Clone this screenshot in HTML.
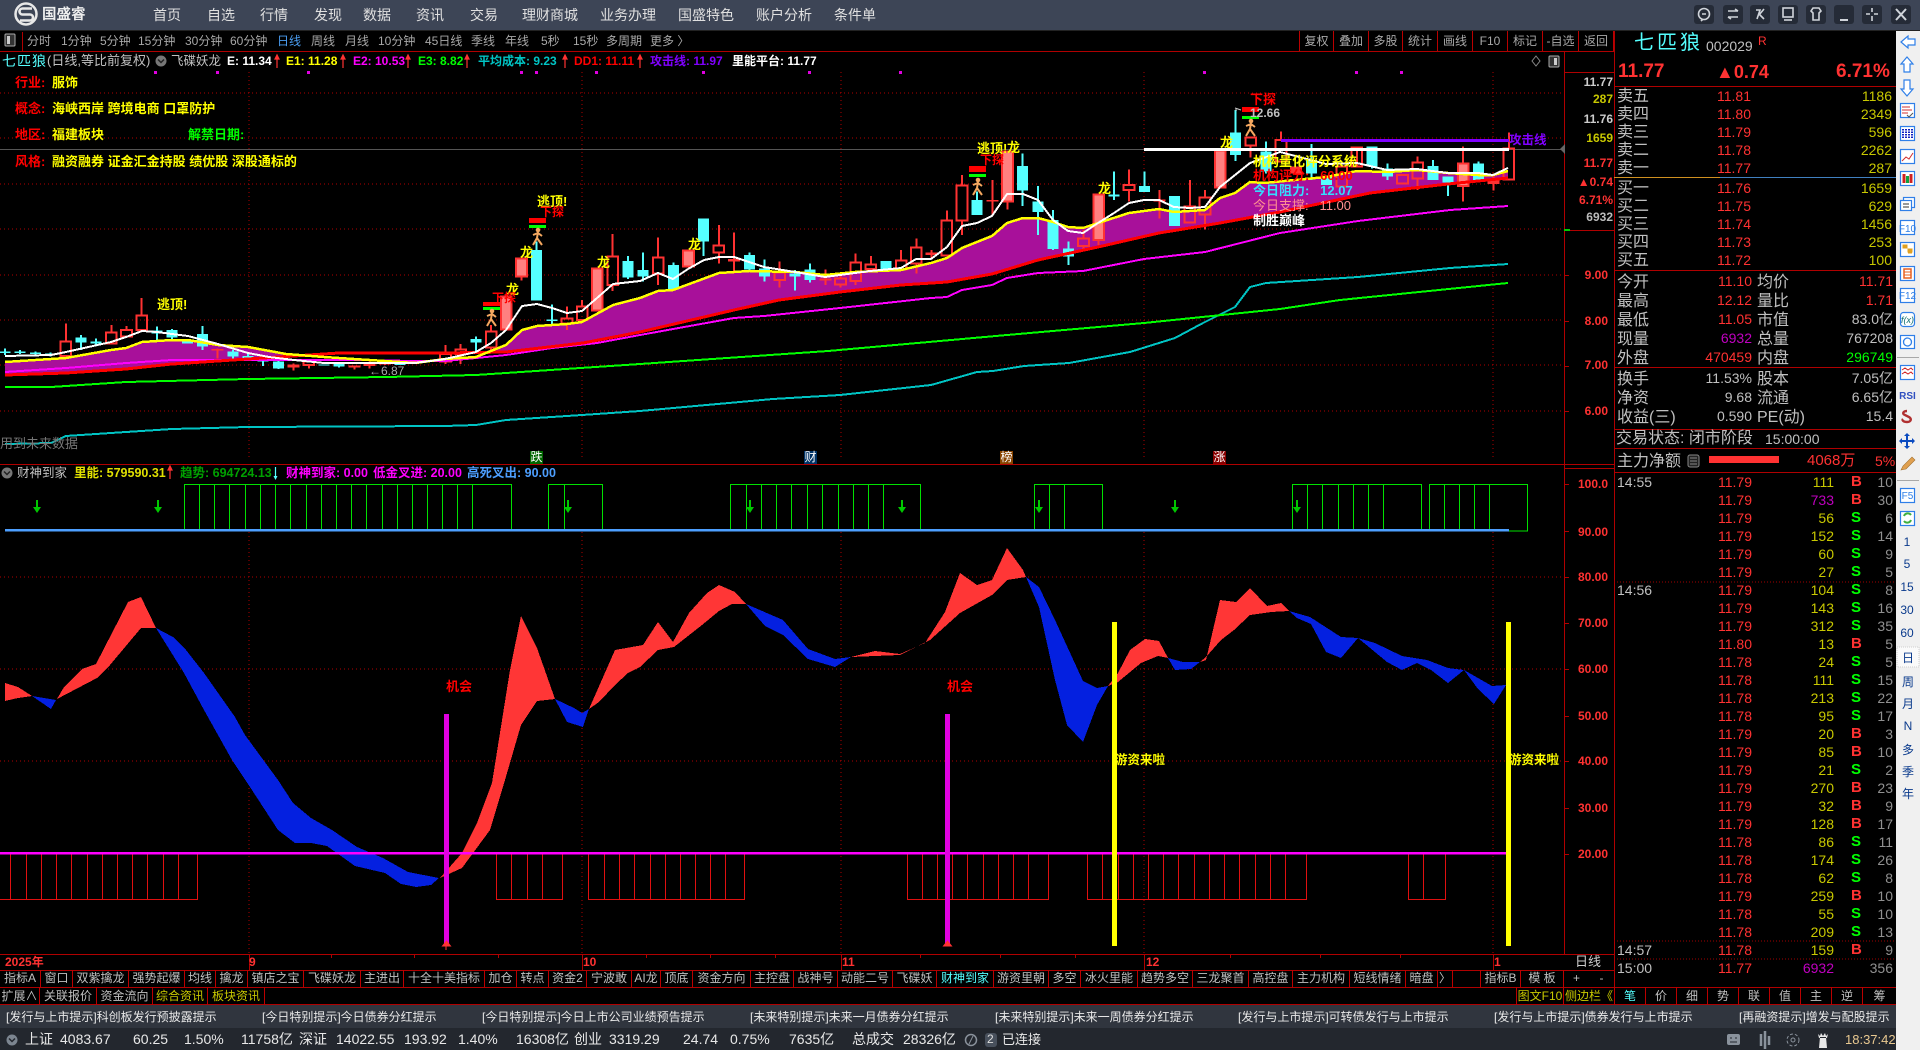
<!DOCTYPE html>
<html lang="zh">
<head>
<meta charset="utf-8">
<title>国盛睿</title>
<style>
html,body{margin:0;padding:0;background:#000}
body{position:relative;width:1920px;height:1050px;overflow:hidden;font-family:"Liberation Sans","WenQuanYi Zen Hei","Noto Sans CJK SC",sans-serif;font-size:12px;color:#c0c0c0}
.t{position:absolute;white-space:nowrap;line-height:20px;height:20px}
.bd{font-weight:bold}
svg{position:absolute;left:0;top:0}
.c path{vector-effect:non-scaling-stroke;fill:none}
.k{position:absolute;top:970px;height:17px;line-height:17px;text-align:center;border-right:1px solid #b00;box-sizing:border-box;color:#c0c0c0;white-space:nowrap;overflow:hidden}
.m{top:987px;height:18px;line-height:18px}
.top{position:absolute;top:0;height:30px;line-height:30px;font-size:14px;color:#e0e0e0;white-space:nowrap}
.tb{position:absolute;top:31px;height:20px;line-height:20px;color:#a8a8a8;white-space:nowrap}
.tr{position:absolute;top:31px;height:20px;line-height:20px;text-align:center;border-left:1px solid #b00;box-sizing:border-box;color:#a8a8a8}
.p{position:absolute;left:1614px;width:282px}
.r{position:relative;height:18px;line-height:18px}
.r19{height:19px;line-height:19px}
.r span{position:absolute;white-space:nowrap}
.l{left:3px;top:1px;font-size:16px;color:#c0c0c0}
.pr{right:145px;font-size:14px;color:#ff3232}
.v{right:4px;font-size:14px;color:#c8c800}
.sv{right:144px;font-size:14px;color:#c0c0c0}
.l2{left:143px;top:1px;font-size:16px;color:#c0c0c0}
.sw{right:3px;font-size:14px;color:#c0c0c0}
.a{left:3px;font-size:14px;color:#c0c0c0}
.b{right:144px;font-size:14px;color:#ff3232}
.n{right:62px;font-size:14px;color:#c8c800}
.d{left:237px;font-size:15px;font-weight:bold;color:#0f0}
.d.x{color:#ff3232}
.e{right:3px;font-size:14px;color:#909090}
.red{color:#ff3232}
.pu{color:#c000c0}
.y{color:#ff0}
.tag{position:absolute;top:451px;width:13px;height:13px;line-height:13px;color:#fff;text-align:center;font-size:12px}
.tk{position:absolute;top:1006px;height:22px;line-height:22px;color:#e8e8e8;white-space:nowrap}
.st{position:absolute;top:1029px;height:21px;line-height:21px;font-size:14px;white-space:nowrap;color:#e8e8e8}
</style>
</head>
<body>

<svg width="1920" height="1050" viewBox="0 0 1920 1050">
<!-- Bars -->
<rect x="0" y="0" width="1920" height="30" fill="#3d4556"/>
<rect x="0" y="30" width="1920" height="1" fill="#222"/>
<rect x="0" y="1005" width="1896" height="23" fill="#30353e"/>
<rect x="0" y="1028" width="1896" height="22" fill="#23272e"/>
<rect x="1896" y="31" width="24" height="1019" fill="#f0f0f0"/>

<!-- logo -->
<circle cx="26" cy="14" r="10.5" fill="none" stroke="#e8e8e8" stroke-width="2.5"/>
<path d="M32 8.5H22.5a3 3 0 0 0 0 6H30a3 3 0 0 1 0 6H20" fill="none" stroke="#e8e8e8" stroke-width="2.6"/>

<!-- win buttons -->
<g fill="#252b37">
<rect x="1694" y="5" width="20" height="19" rx="3"/><rect x="1723" y="5" width="20" height="19" rx="3"/>
<rect x="1750" y="5" width="20" height="19" rx="3"/><rect x="1778" y="5" width="20" height="19" rx="3"/>
<rect x="1806" y="5" width="20" height="19" rx="3"/><rect x="1834" y="5" width="20" height="19" rx="3"/>
<rect x="1862" y="5" width="20" height="19" rx="3"/><rect x="1891" y="5" width="20" height="19" rx="3"/>
</g>
<g fill="none" stroke="#d0d4da" stroke-width="1.6">
<circle cx="1704" cy="14" r="5.5"/><path d="M1702 14h4M1703 19l-2 2"/>
<path d="M1728 11h10M1735 9l3 2M1728 17h10M1731 19l-3-2"/>
<path d="M1756 10h4l-3 9M1759 14l5 5M1764 9l-5 6"/>
<rect x="1783" y="8" width="10" height="9"/><path d="M1784 20h8"/>
<path d="M1813 8h6l2 3-2 2v7h-6v-7l-2-2z"/>
<path d="M1840 20h8" stroke-width="2"/>
<path d="M1872 8v4M1872 16v5M1866 14h4M1874 14h4"/>
<path d="M1896 9l10 11M1906 9l-10 11" stroke-width="2"/>
</g>

<!-- Grid -->
<g stroke="#b00000" stroke-width="1" stroke-dasharray="1 3" fill="none">
<path d="M0 93H1564M0 138H1564M0 184H1564M0 229H1564M0 275H1564M0 320H1564M0 365H1564M0 411H1564"/>
<path d="M0 577H1564M0 669H1564M0 761H1564"/>
<path d="M249 72V460M582 72V460M841 72V460M1144 72V460M1493 72V460M249 532V954M582 532V954M841 532V954M1144 532V954M1493 532V954"/>
</g>
<path d="M0 149.5H1144M1509 149.5H1564" stroke="#555" stroke-width="1"/>

<!-- separators -->
<g stroke="#b00000" stroke-width="1" fill="none" shape-rendering="crispEdges">
<path d="M0 51.5H1614M0 464.5H1564M0 954.5H1614M0 970.5H1614M0 987.5H1896M0 1004.5H1896"/>
<path d="M1564.5 52V954M1614.5 31V1005M22.5 32V51"/>
<path d="M1564 72.5H1614M1564 230.5H1614M1564 464.5H1614M1564 468.5H1614"/>
<path d="M1614 86.5H1896M1614 270.5H1896M1614 367.5H1896M1614 429.5H1896M1614 448.5H1896M1614 472.5H1896"/>
<path d="M1564 275.5h5M1564 321.5h5M1564 366.5h5M1564 411.5h5M1564 484.5h5M1564 531.5h5M1564 577.5h5M1564 623.5h5M1564 669.5h5M1564 716.5h5M1564 761.5h5M1564 808.5h5M1564 854.5h5"/>
<path d="M331.5 954v4M414.5 954v4M498.5 954v4M646.5 954v4M710.5 954v4M775.5 954v4M249.5 954v16M582.5 954v16M841.5 954v16M1144.5 954v16M1493.5 954v16M920.5 954v4M1000.5 954v4M1075.5 954v4M1230.5 954v4M1320.5 954v4M1400.5 954v4"/>
</g>
<path d="M1614 177.5H1720" stroke="#d09020"/><path d="M1720 177.5H1896" stroke="#4080c0"/>
<path d="M1614 582H1896M1614 941H1896M1614 959H1896" stroke="#a00000" stroke-dasharray="1 2"/>
<path d="M1560 149l5-5v10z" fill="#666"/>
<path d="M1564 230h6" stroke="#0c0" stroke-width="2"/>

<!-- top magenta dots -->
<g fill="#e000e0"><rect x="154" y="71" width="3" height="3"/><rect x="216" y="71" width="3" height="3"/><rect x="307" y="71" width="3" height="3"/><rect x="520" y="71" width="3" height="3"/><rect x="535" y="71" width="3" height="3"/><rect x="595" y="71" width="3" height="3"/><rect x="702" y="71" width="3" height="3"/><rect x="808" y="71" width="3" height="3"/><rect x="899" y="71" width="3" height="3"/><rect x="1203" y="71" width="3" height="3"/><rect x="1355" y="71" width="3" height="3"/><rect x="1400" y="71" width="3" height="3"/></g>

<!-- Purple fill -->
<g fill="#a8109a" shape-rendering="crispEdges">
<polygon points="5,362 51,359 66,358 111,350 126,348 142,342 172,340 188,340 218,345 248,347 286,354 294,356 263,358 218,361 172,364 126,369 66,373 5,375"/>
<polygon points="480,353 506,345 522,330 537,326 567,324 582,322 613,305 640,298 658,291 673,290 719,273 749,271 795,272 825,275 855,272 901,270 931,263 947,258 962,248 992,236 1007,223 1023,218 1038,218 1053,222 1068,227 1083,228 1098,223 1129,213 1159,209 1174,212 1205,210 1220,198 1235,193 1250,182 1264,183 1326,177 1357,171 1387,172 1417,170 1448,173 1478,175 1493,175 1508,171 1508,178 1448,184 1370,193 1280,212 1220,223 1159,233 1098,247 1038,260 992,274 947,282 901,285 840,292 779,300 734,310 640,332 583,343 506,352"/>
</g>

<!-- Candles zoom-space groups -->
<g class="c" shape-rendering="crispEdges">
<g transform="translate(5,180) scale(15.19,.33333)">
<path stroke="#ff3232" stroke-width="2" d="M4 430V485M4 528V530M7 435V458M8 438V450M9 354V406M14 505V535M19 550V572M20 540V545M20 555V566M23 556V568M24 545V565M25 545V555M29 495V522M29 545V552M30 492V508M30 522V552M32 435V455M32 502V515M33 340V350M34 290V302M37 380V415M37 430V450M38 360V380M40 162V230M40 315V333"/>
<path stroke="#ff3232" stroke-width="12" d="M14 507V512M19 553V562M23 556V562M24 548V558M25 548V553"/>
<path stroke="#ff3232" stroke-width="2" d="M3.65 485h.7v43h-.7zM6.65 458h.7v32h-.7zM7.65 450h.7v20h-.7zM8.65 406h.7v44h-.7zM19.65 545h.7v10h-.7zM28.65 522h.7v23h-.7zM29.65 508h.7v14h-.7zM31.65 455h.7v47h-.7zM36.65 415h.7v15h-.7zM37.65 380h.7v40h-.7zM39.65 230h.7v85h-.7z"/>
<path stroke="#ff3232" stroke-width="2" style="fill:#ff8080" d="M32.65 350h.7v98h-.7zM33.65 235h.7v55h-.7zM38.65 265h.7v127h-.7z"/>
<path stroke="#55ffff" stroke-width="2" d="M0 505V525M1 510V522M2 515V525M3 518V530M5 465V510M6 475V495M10 440V485M11 447V478M13 438V510M15 510V535M16 518V540M17 538V558M18 543V567M22 548V562M31 470V515M36 373V435M35 185V210M41 228V297"/>
<path stroke="#55ffff" stroke-width="11" d="M0 515V519M1 515V519M2 518V522M3 520V524M5 473V487M6 484V490M10 452V460M11 450V473M12 480V490M13 462V500M15 515V530M16 528V534M17 540V545M18 545V565M21 553V557M22 552V560M26 548V555M31 477V487M35 210V362M36 418V423M41 243V292"/>
</g>
<g transform="translate(5,100) scale(15.19,.33333)">
<path stroke="#ff3232" stroke-width="2" d="M43 412V473M43 520V555M47 375V437M47 458V490M48 397V520M51 485V518M51 540V562M54 508V555M55 525V535M55 553V562M56 460V488M56 543V555M57 468V493M57 507V515M59 450V482M59 508V512M60 415V443M60 490V520M61 450V478M62 332V362M63 225V257M63 362V405M65 240V345M66 305V328M71 390V415M71 438V447M72 420V435M74 208V255M74 270V305M76 270V355M78 240V320M79 270V292M79 343V388M82 137V172"/>
<path stroke="#ff3232" stroke-width="12" d="M48 477V485M54 535V542M61 458V465M65 300V304M76 298V305"/>
<path stroke="#ff3232" stroke-width="2" d="M42.65 473h.7v47h-.7zM46.65 437h.7v21h-.7zM50.65 518h.7v22h-.7zM54.65 535h.7v18h-.7zM55.65 488h.7v55h-.7zM56.65 493h.7v14h-.7zM58.65 482h.7v26h-.7zM59.65 443h.7v47h-.7zM61.65 362h.7v105h-.7zM62.65 257h.7v105h-.7zM70.65 415h.7v23h-.7zM73.65 255h.7v15h-.7zM77.65 320h.7v48h-.7zM78.65 292h.7v51h-.7zM81.65 112h.7v25h-.7z"/>
<path stroke="#ff3232" stroke-width="2" style="fill:#ff8080" d="M44.65 452h.7v48h-.7zM65.65 155h.7v150h-.7zM71.65 283h.7v137h-.7zM79.65 152h.7v110h-.7z"/>
<path stroke="#55ffff" stroke-width="2" d="M42 457V545M44 487V570M46 425V468M49 457V510M50 478V545M52 510V572M53 490V548M64 275V300M67 160V318M68 258V405M69 330V450M70 425V495M73 215V300M75 215V276M81 30V183"/>
<path stroke="#55ffff" stroke-width="11" d="M42 510V530M44 495V568M46 355V425M49 465V508M50 505V530M52 520V530M53 508V540M58 483V510M64 300V345M67 198V272M68 305V336M69 360V447M70 445V470M73 283V289M75 258V276M77 288V378M81 98V165"/>
</g>
<g transform="translate(5,0) scale(15.19,.33333)">
<path stroke="#ff3232" stroke-width="2" d="M84 395V420M93 470V488M93 535V570M96 440V490M96 558V605M98 520V572M99 398V445M89 442V500"/>
<path stroke="#ff3232" stroke-width="12" d="M85 500V520M98 540V552"/>
<path stroke="#ff3232" stroke-width="2" d="M83.65 420h.7v65h-.7zM87.65 500h.7v60h-.7zM88.65 442h.7v58h-.7zM91.65 525h.7v25h-.7zM92.65 488h.7v47h-.7zM98.65 445h.7v93h-.7z"/>
<path stroke="#ff3232" stroke-width="2" style="fill:#ff8080" d="M95.65 490h.7v68h-.7z"/>
<path stroke="#55ffff" stroke-width="2" d="M83 425V520M86 432V540M91 490V540M94 480V540M95 530V588M97 485V545M90 440V505"/>
<path stroke="#55ffff" stroke-width="11" d="M83 455V515M86 480V520M87 530V555M90 440V500M91 505V530M94 498V540M95 530V548M97 490V540"/>
</g>
</g>

<!-- MA lines -->
<g fill="none" shape-rendering="crispEdges">
<polyline stroke="#00c4c4" stroke-width="2" points="5,444 51,443 66,436 126,432 172,429 248,427 445,426 476,425 506,420 582,415 640,411 773,399 840,395 931,385 977,372 993,371 1024,366 1069,363 1130,352 1175,338 1203,323 1235,307 1250,287 1266,283 1358,277 1450,268 1508,264"/>
<polyline stroke="#00ff00" stroke-width="2" points="5,387 51,387 126,382 248,379 386,377 476,375 640,364 828,351 1007,335 1144,323 1280,309 1340,300 1508,283"/>
<polyline stroke="#ff00ff" stroke-width="2" points="5,372 66,368 126,363 172,360 218,360 354,360 415,361 445,361 476,358 506,355 552,348 597,343 640,335 734,318 764,316 840,308 931,298 947,297 962,290 992,285 1007,278 1038,273 1083,271 1144,259 1205,252 1280,233 1358,221 1450,210 1508,206"/>
<polyline stroke="#ff0000" stroke-width="3" points="5,375 66,373 126,369 172,364 218,361 263,358 294,356 339,353 415,353 445,353 506,352 583,343 640,332 734,310 779,300 840,292 901,285 947,282 992,274 1038,260 1098,247 1159,233 1220,223 1280,212 1370,193 1448,184 1508,178"/>
<polyline stroke="#ffff00" stroke-width="2.5" points="5,362 51,359 66,358 111,350 126,348 142,342 172,340 188,340 218,345 248,347 286,354 324,357 354,359 415,363 445,359 476,357 506,345 522,330 537,326 567,324 582,322 613,305 640,298 658,291 673,290 719,273 749,271 795,272 825,275 855,272 901,270 931,263 947,258 962,248 992,236 1007,223 1023,218 1038,218 1053,222 1068,227 1083,228 1098,223 1129,213 1159,209 1174,212 1205,210 1220,198 1235,193 1250,182 1264,183 1326,177 1357,171 1387,172 1417,170 1448,173 1478,175 1493,175 1508,171"/>
<polyline stroke="#ffffff" stroke-width="2" points="5,356 51,355 66,352 111,342 126,337 142,331 157,332 172,334 188,336 218,344 248,353 269,357 294,360 324,363 354,363 415,363 445,359 476,352 491,343 506,330 522,306 537,304 552,308 567,313 582,311 597,298 613,284 640,281 658,273 673,279 688,269 704,260 719,257 734,257 749,262 764,267 795,272 825,277 840,275 870,271 901,268 916,259 931,259 947,247 962,226 977,223 992,216 1007,194 1023,194 1038,200 1053,220 1068,231 1083,233 1098,223 1114,213 1129,203 1144,200 1159,200 1174,207 1190,208 1205,207 1220,187 1235,175 1250,163 1280,152 1326,164 1357,163 1387,170 1417,169 1448,173 1478,173 1493,175 1508,168"/>
</g>
<rect x="1144" y="148" width="365" height="3" fill="#fff"/>
<rect x="1281" y="139" width="228" height="3" fill="#8000ff"/>

<!-- Signal bars & runners -->
<defs>
<g id="run" fill="none" stroke="#f5a860" stroke-width="2"><circle cx="0" cy="-8" r="1.3" fill="#f5a860"/><path d="M0-6L-1 0L-5 7M-1 0L4 7M-5-3L0-5L4-2"/></g>
</defs>
<g>
<rect x="529" y="218" width="17" height="5" fill="#f00"/><rect x="529" y="225" width="17" height="3" fill="#0f0"/><use href="#run" x="538" y="238"/>
<rect x="483" y="302" width="17" height="4" fill="#f00"/><rect x="483" y="307" width="17" height="3" fill="#0f0"/><use href="#run" x="492" y="319"/>
<rect x="969" y="166" width="17" height="6" fill="#f00"/><rect x="969" y="174" width="17" height="3" fill="#0f0"/><use href="#run" x="978" y="188"/>
<rect x="1242" y="107" width="17" height="5" fill="#f00"/><rect x="1242" y="116" width="17" height="3" fill="#0f0"/><use href="#run" x="1251" y="129"/>
</g>
<path d="M1235 108l6 2M1237 110h-2" stroke="#ccc" fill="none"/>

<!-- Sub chart: green boxes -->
<g fill="none" stroke="#00e000" stroke-width="1" shape-rendering="crispEdges">
<path d="M184.5 530V484.5H511.5V530M548.5 530V484.5H602.5V530M730.5 530V484.5H920.5V530M1034.5 530V484.5H1102.5V530M1292.5 530V484.5H1421.5V530M1429.5 530V484.5H1527.5V531H1509"/>
<path d="M199.5 485V530M214.5 485V530M229.5 485V530M245.5 485V530M260.5 485V530M275.5 485V530M290.5 485V530M306.5 485V530M321.5 485V530M336.5 485V530M351.5 485V530M366.5 485V530M382.5 485V530M397.5 485V530M412.5 485V530M427.5 485V530M442.5 485V530M457.5 485V530M472.5 485V530M564.5 485V530M746.5 485V530M761.5 485V530M776.5 485V530M791.5 485V530M807.5 485V530M822.5 485V530M838.5 485V530M853.5 485V530M868.5 485V530M883.5 485V530M1049.5 485V530M1064.5 485V530M1307.5 485V530M1322.5 485V530M1338.5 485V530M1353.5 485V530M1368.5 485V530M1383.5 485V530M1444.5 485V530M1459.5 485V530M1474.5 485V530M1489.5 485V530"/>
</g>
<rect x="5" y="529" width="1504" height="2.5" fill="#4d9fff"/>
<g fill="#00c800">
<path d="M36 500h2v7h3l-4 6-4-6h3zM157 500h2v7h3l-4 6-4-6h3zM567 500h2v7h3l-4 6-4-6h3zM749 500h2v7h3l-4 6-4-6h3zM901 500h2v7h3l-4 6-4-6h3zM1038 500h2v7h3l-4 6-4-6h3zM1174 500h2v7h3l-4 6-4-6h3zM1296 500h2v7h3l-4 6-4-6h3z"/>
</g>

<!-- Sub chart: bands -->
<g shape-rendering="crispEdges">
<g fill="#ff3636">
<polygon points="5,683 18,687 32,696 18,698 5,701"/>
<polygon points="57,699 64,687 82,669 96,664 128,602 141,597 156,628 141,628 110,665 97,678"/>
<polygon points="440,878 462,853 477,823 492,783 510,670 521,616 537,648 555,699 537,701 521,725 505,780 490,830 462,868"/>
<polygon points="589,709 615,650 643,645 658,622 673,642 689,613 707,593 719,585 735,592 746,604 732,604 719,611 702,625 674,647 658,650 640,667 628,673 615,685 599,702"/>
<polygon points="851,657 875,651 900,654 925,643 945,612 960,573 977,585 992,580 1007,548 1023,570 1026,577 1007,580 992,595 960,613 930,640 900,655 875,656"/>
<polygon points="1108,686 1118,673 1130,650 1145,639 1159,641 1168,658 1158,656 1141,663 1118,682"/>
<polygon points="1200,662 1206,660 1220,600 1236,602 1250,588 1267,606 1281,603 1289,611 1271,612 1250,615 1234,630 1221,640 1206,657"/>
</g>
<g fill="#0420e0">
<polygon points="32,696 56,700 51,709"/>
<polygon points="156,628 173,637 186,650 204,673 235,717 245,735 278,780 293,803 311,818 332,830 357,847 383,858 408,872 439,878 431,885 416,887 401,884 385,873 355,866 327,846 311,843 295,843 278,830 250,787 232,760 204,710 184,673"/>
<polygon points="555,699 574,708 582,713 589,709 583,727 567,722"/>
<polygon points="746,604 783,620 808,649 835,659 851,657 835,667 808,659 783,635 765,626"/>
<polygon points="1026,577 1039,587 1055,620 1083,681 1097,688 1108,686 1097,705 1083,742 1067,725 1055,680 1039,607"/>
<polygon points="1168,658 1183,662 1200,662 1191,669 1175,670"/>
<polygon points="1289,611 1310,617 1341,637 1358,638 1341,658 1326,652 1311,624 1297,618"/>
<polygon points="1358,638 1375,643 1402,656 1427,660 1448,668 1464,670 1448,683 1431,670 1417,663 1402,670 1387,662"/>
<polygon points="1464,670 1492,686 1506,685 1494,704 1478,689"/>
</g>
</g>

<!-- Sub chart: red boxes -->
<g fill="none" stroke="#e01010" stroke-width="1" shape-rendering="crispEdges">
<path d="M0 899.5H197.5V854M10.5 854V899M26.5 854V899M41.5 854V899M56.5 854V899M71.5 854V899M87.5 854V899M102.5 854V899M117.5 854V899M132.5 854V899M147.5 854V899M163.5 854V899M178.5 854V899"/>
<path d="M496.5 854V899.5H562.5V854M511.5 854V899M527.5 854V899M542.5 854V899"/>
<path d="M588.5 854V899.5H744.5V854M604.5 854V899M619.5 854V899M634.5 854V899M650.5 854V899M665.5 854V899M680.5 854V899M695.5 854V899M710.5 854V899M725.5 854V899"/>
<path d="M907.5 854V899.5H1048.5V854M922.5 854V899M937.5 854V899M952.5 854V899M967.5 854V899M983.5 854V899M998.5 854V899M1013.5 854V899M1028.5 854V899"/>
<path d="M1087.5 854V899.5H1306.5V854M1102.5 854V899M1118.5 854V899M1133.5 854V899M1148.5 854V899M1163.5 854V899M1178.5 854V899M1194.5 854V899M1209.5 854V899M1224.5 854V899M1239.5 854V899M1255.5 854V899M1270.5 854V899M1285.5 854V899"/>
<path d="M1408.5 854V899.5H1445.5V854M1423.5 854V899"/>
</g>
<rect x="0" y="852" width="1509" height="2.5" fill="#ff00ff"/>
<rect x="444" y="714" width="5" height="232" fill="#e000e0"/>
<rect x="945" y="714" width="5" height="232" fill="#e000e0"/>
<rect x="1112" y="622" width="5" height="324" fill="#ffff00"/>
<rect x="1506" y="622" width="5" height="324" fill="#ffff00"/>
<path d="M446.5 941l4 5h-8zM446 946v4M947.5 941l4 5h-8z" fill="#f33" stroke="#f33" stroke-width="1"/>

<!-- info icons & small arrows -->
<circle cx="161" cy="61" r="5.5" fill="#777"/><path d="M158 59.5l3 3 3-3" fill="none" stroke="#222" stroke-width="1.5"/>
<circle cx="7" cy="473" r="5.5" fill="#777"/><path d="M4 471.5l3 3 3-3" fill="none" stroke="#222" stroke-width="1.5"/>
<rect x="5" y="34" width="10" height="12" rx="1" fill="#333" stroke="#aaa"/><rect x="7" y="36" width="3" height="8" fill="#ccc"/>
<g stroke="#f33" fill="#f33" stroke-width="1.2"><path d="M277 57v11M343 57v11M408 57v11M467 57v11M565 57v11M640 57v11M170 468v11"/><path d="M277 55l-2 4h4zM343 55l-2 4h4zM408 55l-2 4h4zM467 55l-2 4h4zM565 55l-2 4h4zM640 55l-2 4h4zM170 466l-2 4h4z"/></g>
<path d="M275.5 467v11" stroke="#5ff" stroke-width="1.2"/><path d="M275.5 480l-2-4h4z" fill="#5ff"/>
<path d="M1536 56l4 5-4 5-4-5z" fill="none" stroke="#888"/>
<rect x="1549" y="56" width="10" height="11" rx="1" fill="#333" stroke="#aaa"/><rect x="1554" y="58" width="3" height="7" fill="#ccc"/>

<!-- Right panel small -->
<rect x="1709" y="456" width="70" height="7" fill="#ff3232"/>
<rect x="1688" y="455" width="11" height="12" rx="2" fill="#222" stroke="#888"/><path d="M1690 458h7M1690 461h7M1690 464h7" stroke="#888"/>

<!-- Status icons -->
<circle cx="12" cy="1040" r="5.5" fill="#7c8590"/><path d="M9 1038.5l3 3 3-3" fill="none" stroke="#23272e" stroke-width="1.5"/>
<circle cx="971" cy="1040" r="5.5" fill="none" stroke="#8a929c" stroke-width="1.5"/><path d="M973 1036l-4 8" stroke="#8a929c"/>
<rect x="985" y="1033" width="12" height="14" rx="3" fill="#48505c"/>
<rect x="1727" y="1034" width="13" height="11" rx="2" fill="#8a929c"/><path d="M1730 1038h2M1735 1038h2M1730 1042h7" stroke="#23272e"/>
<path d="M1761 1034v12M1765 1031v18M1769 1036v9" stroke="#8a929c" stroke-width="2.5"/>
<circle cx="1793" cy="1040" r="6" fill="none" stroke="#8a929c" stroke-dasharray="3 2"/><circle cx="1793" cy="1040" r="2" fill="none" stroke="#8a929c"/>
<path d="M1819 1048h8l-1-11h-6zM1818 1034l2 2 1-3 2 3 2-3 1 3 2-2-1 4h-8z" fill="#e8e8e8"/>

<!-- Sidebar icons -->
<g fill="#fff" stroke="#2f7fe8" stroke-width="1.2">
<path d="M1901 42l7-6v3h7v6h-7v3z"/>
<path d="M1907 57l6 7h-3v8h-6v-8h-3z"/>
<path d="M1904 80h6v9h3l-6 7-6-7h3z"/>
<rect x="1900.5" y="103.5" width="14" height="14"/>
<rect x="1900.5" y="126.5" width="14" height="14"/>
<rect x="1900.5" y="149.5" width="14" height="14"/>
<rect x="1900.5" y="171.5" width="14" height="14"/>
<rect x="1903.5" y="197.5" width="11" height="10"/><rect x="1900.5" y="200.5" width="11" height="10"/>
<rect x="1900.5" y="220.5" width="14" height="14"/>
<rect x="1900.5" y="242.5" width="14" height="14"/>
<rect x="1900.5" y="266.5" width="14" height="14"/>
<rect x="1900.5" y="288.5" width="14" height="14"/>
<rect x="1900.5" y="312.5" width="14" height="14" rx="3"/>
<rect x="1900.5" y="335.5" width="14" height="13"/>
<rect x="1900.5" y="365.5" width="14" height="14"/>
<rect x="1900.5" y="488.5" width="14" height="14"/>
<rect x="1900.5" y="511.5" width="14" height="14"/>
</g>
<path d="M1902 107h8M1902 110h10M1902 113h6" stroke="#d03030"/><path d="M1907 115l2 2 4-4" stroke="#555" fill="none"/>
<path d="M1903 129v9M1906 129v9M1909 129v9M1912 129v9" stroke="#1020c0" stroke-width="2" stroke-dasharray="1.5 1"/>
<path d="M1902 161l4-4 3 2 4-6" stroke="#d03030" fill="none"/>
<path d="M1904 174v9M1911 174v9" stroke="#d02020" stroke-width="3"/><path d="M1907.5 176v7" stroke="#10a040" stroke-width="3"/>
<path d="M1903 204h6M1903 207h6" stroke="#333"/>
<path d="M1903 245h4v3h-4zM1908 249h4v3h-4zM1908 253h4" fill="#e0a020" stroke="#e0a020"/>
<rect x="1904" y="269" width="7" height="9" fill="none" stroke="#e86020" stroke-width="1.5"/><path d="M1904 272h7M1904 275h7" stroke="#e86020"/>
<circle cx="1907.5" cy="342" r="4" fill="none" stroke="#2f7fe8" stroke-width="1.3"/>
<path d="M1897 357.5h22M1897 480.5h22" stroke="#a8a8a8"/>
<path d="M1902 370l3-2 3 2 3-2 2 2M1902 374l3-2 3 2 3-2 2 2" stroke="#d02020" fill="none"/>
<path d="M1907 411c-4 0-5 3-2 4l4 2c3 2 2 5-2 5s-5-2-4-3M1909 412" fill="none" stroke="#b03030" stroke-width="2.4"/>
<path d="M1907 433l3 3h-2v4h4v-2l3 3-3 3v-2h-4v4h2l-3 3-3-3h2v-4h-4v2l-3-3 3-3v2h4v-4h-2z" fill="#0a4ac0"/>
<path d="M1901 470l2-4 9-9 3 3-9 9z" fill="#e0a050" stroke="#a07030" stroke-width=".6"/>
<path d="M1904 516a4 4 0 0 1 7-1M1911 520a4 4 0 0 1-7 1" stroke="#40b040" stroke-width="2" fill="none"/>
<rect x="1897" y="647" width="22" height="20" fill="#fafafa" stroke="#cfcfcf" stroke-dasharray="1 1"/>
</svg>

<!-- Title bar -->
<div class="t bd" style="left:42px;top:5px;font-size:14.5px;color:#eee">国盛睿</div>
<span class="top" style="left:153px">首页</span><span class="top" style="left:207px">自选</span><span class="top" style="left:260px">行情</span><span class="top" style="left:314px">发现</span><span class="top" style="left:363px">数据</span><span class="top" style="left:416px">资讯</span><span class="top" style="left:470px">交易</span><span class="top" style="left:522px">理财商城</span><span class="top" style="left:600px">业务办理</span><span class="top" style="left:678px">国盛特色</span><span class="top" style="left:756px">账户分析</span><span class="top" style="left:834px">条件单</span>

<!-- Period toolbar -->
<span class="tb" style="left:27px">分时</span><span class="tb" style="left:61px">1分钟</span><span class="tb" style="left:100px">5分钟</span><span class="tb" style="left:138px">15分钟</span><span class="tb" style="left:185px">30分钟</span><span class="tb" style="left:230px">60分钟</span><span class="tb" style="left:277px;color:#4a9cf0">日线</span><span class="tb" style="left:311px">周线</span><span class="tb" style="left:345px">月线</span><span class="tb" style="left:378px">10分钟</span><span class="tb" style="left:425px">45日线</span><span class="tb" style="left:471px">季线</span><span class="tb" style="left:505px">年线</span><span class="tb" style="left:541px">5秒</span><span class="tb" style="left:573px">15秒</span><span class="tb" style="left:606px">多周期</span><span class="tb" style="left:650px">更多 〉</span>
<span class="tr" style="left:1299px;width:34px">复权</span><span class="tr" style="left:1333px;width:35px">叠加</span><span class="tr" style="left:1368px;width:34px">多股</span><span class="tr" style="left:1402px;width:35px">统计</span><span class="tr" style="left:1437px;width:35px">画线</span><span class="tr" style="left:1472px;width:35px">F10</span><span class="tr" style="left:1507px;width:35px">标记</span><span class="tr" style="left:1542px;width:36px">-自选</span><span class="tr" style="left:1578px;width:36px;border-right:1px solid #b00">返回</span>

<!-- Info row -->
<div class="t" style="left:2px;top:51px;font-size:14px;color:#55ffff;letter-spacing:1px">七匹狼</div>
<div class="t" style="left:47px;top:51px;font-size:13px;color:#c0c0c0">(日线,等比前复权)</div>
<div class="t" style="left:171px;top:51px;font-size:12.5px;color:#c0c0c0">飞碟妖龙</div>
<div class="t bd" style="left:227px;top:51px;color:#fff">E: 11.34</div>
<div class="t bd" style="left:286px;top:51px;color:#ff0">E1: 11.28</div>
<div class="t bd" style="left:353px;top:51px;color:#f0f">E2: 10.53</div>
<div class="t bd" style="left:418px;top:51px;color:#0f0">E3: 8.82</div>
<div class="t bd" style="left:478px;top:51px;color:#00c4c4">平均成本: 9.23</div>
<div class="t bd" style="left:574px;top:51px;color:#f00">DD1: 11.11</div>
<div class="t bd" style="left:650px;top:51px;color:#8000ff">攻击线: 11.97</div>
<div class="t bd" style="left:732px;top:51px;color:#fff">里能平台: 11.77</div>

<!-- Left info -->
<div class="t bd" style="left:15px;top:73px;font-size:13px;color:#f00">行业:</div><div class="t bd" style="left:52px;top:73px;font-size:13px;color:#ff0">服饰</div>
<div class="t bd" style="left:15px;top:99px;font-size:13px;color:#f00">概念:</div><div class="t bd" style="left:52px;top:99px;font-size:13px;color:#ff0">海峡西岸 跨境电商 口罩防护</div>
<div class="t bd" style="left:15px;top:125px;font-size:13px;color:#f00">地区:</div><div class="t bd" style="left:52px;top:125px;font-size:13px;color:#ff0">福建板块</div>
<div class="t bd" style="left:188px;top:125px;font-size:13px;color:#0f0">解禁日期:</div>
<div class="t bd" style="left:15px;top:152px;font-size:13px;color:#f00">风格:</div><div class="t bd" style="left:52px;top:152px;font-size:13px;color:#ff0">融资融券 证金汇金持股 绩优股 深股通标的</div>

<!-- Chart annotations -->
<div class="t bd" style="left:157px;top:295px;font-size:13px;color:#ff0">逃顶!</div>
<div class="t bd" style="left:537px;top:192px;font-size:13px;color:#ff0">逃顶!</div>
<div class="t bd" style="left:540px;top:202px;font-size:12px;color:#f00">下探</div>
<div class="t bd" style="left:520px;top:243px;font-size:13px;color:#ff0">龙</div>
<div class="t bd" style="left:506px;top:280px;font-size:13px;color:#ff0">龙</div>
<div class="t bd" style="left:492px;top:288px;font-size:12px;color:#f00">下探</div>
<div class="t bd" style="left:597px;top:253px;font-size:13px;color:#ff0">龙</div>
<div class="t bd" style="left:688px;top:235px;font-size:13px;color:#ff0">龙</div>
<div class="t bd" style="left:977px;top:139px;font-size:13px;color:#ff0">逃顶!</div>
<div class="t bd" style="left:1007px;top:138px;font-size:13px;color:#ff0">龙</div>
<div class="t bd" style="left:980px;top:150px;font-size:12px;color:#f00">下探</div>
<div class="t bd" style="left:1098px;top:179px;font-size:13px;color:#ff0">龙</div>
<div class="t bd" style="left:1220px;top:133px;font-size:13px;color:#ff0">龙</div>
<div class="t bd" style="left:1250px;top:90px;font-size:13px;color:#f00">下探</div>
<div class="t bd" style="left:1250px;top:103px;color:#c0c0c0;font-size:12px">12.66</div>
<div class="t" style="left:369px;top:361px;color:#a8a8a8;font-size:12px">←6.87</div>
<div class="t" style="left:0;top:434px;color:#777;font-size:13px">用到未来数据</div>
<div class="t bd" style="left:1509px;top:130px;font-size:12.5px;color:#8000ff">攻击线</div>

<div class="t bd" style="left:1253px;top:152px;font-size:13px;color:#ff0">机构量化评分系统</div>
<div class="t bd" style="left:1253px;top:166px;font-size:13px;color:#f00">机构评分:&nbsp;&nbsp;&nbsp;60.00</div>
<div class="t bd" style="left:1253px;top:181px;font-size:13px;color:#33ddff">今日阻力:&nbsp;&nbsp;&nbsp;12.07</div>
<div class="t" style="left:1253px;top:196px;font-size:13px;color:#ff9090">今日支撑:&nbsp;&nbsp;&nbsp;11.00</div>
<div class="t bd" style="left:1253px;top:211px;font-size:13px;color:#fff">制胜巅峰</div>

<span class="tag" style="left:530px;background:#060">跌</span><span class="tag" style="left:804px;background:#036">财</span><span class="tag" style="left:1000px;background:#840">榜</span><span class="tag" style="left:1213px;background:#800">涨</span>

<!-- Sub header -->
<div class="t" style="left:17px;top:463px;font-size:12.5px;color:#c0c0c0">财神到家</div>
<div class="t bd" style="left:74px;top:463px;font-size:12.5px;color:#e0e000">里能: 579590.31</div>
<div class="t bd" style="left:180px;top:463px;font-size:12.5px;color:#00a000">趋势: 694724.13</div>
<div class="t bd" style="left:286px;top:463px;font-size:12.5px;color:#f0f">财神到家: 0.00</div>
<div class="t bd" style="left:373px;top:463px;font-size:12.5px;color:#f0f">低金叉进: 20.00</div>
<div class="t bd" style="left:467px;top:463px;font-size:12.5px;color:#4d9fff">高死叉出: 90.00</div>

<div class="t bd" style="left:446px;top:677px;color:#f00;font-size:13px">机会</div>
<div class="t bd" style="left:947px;top:677px;color:#f00;font-size:13px">机会</div>
<div class="t bd" style="left:1115px;top:750px;color:#ff0;font-size:12.5px">游资来啦</div>
<div class="t bd" style="left:1509px;top:750px;color:#ff0;font-size:12.5px">游资来啦</div>

<!-- Axis labels -->
<div class="t bd" style="left:1564px;width:49px;top:72px;text-align:right;color:#ccc">11.77</div>
<div class="t bd" style="left:1564px;width:49px;top:89px;text-align:right;color:#c8c800">287</div>
<div class="t bd" style="left:1564px;width:49px;top:109px;text-align:right;color:#ccc">11.76</div>
<div class="t bd" style="left:1564px;width:49px;top:128px;text-align:right;color:#c8c800">1659</div>
<div class="t bd" style="left:1564px;width:49px;top:153px;text-align:right;color:#ff3232">11.77</div>
<div class="t bd" style="left:1564px;width:49px;top:172px;text-align:right;color:#ff3232">▲0.74</div>
<div class="t bd" style="left:1564px;width:49px;top:190px;text-align:right;color:#ff3232">6.71%</div>
<div class="t bd" style="left:1564px;width:49px;top:207px;text-align:right;color:#bbb">6932</div>
<div class="t bd red" style="left:1564px;width:44px;top:265px;text-align:right">9.00</div>
<div class="t bd red" style="left:1564px;width:44px;top:311px;text-align:right">8.00</div>
<div class="t bd red" style="left:1564px;width:44px;top:355px;text-align:right">7.00</div>
<div class="t bd red" style="left:1564px;width:44px;top:401px;text-align:right">6.00</div>
<div class="t bd red" style="left:1564px;width:44px;top:474px;text-align:right">100.0</div>
<div class="t bd red" style="left:1564px;width:44px;top:522px;text-align:right">90.00</div>
<div class="t bd red" style="left:1564px;width:44px;top:567px;text-align:right">80.00</div>
<div class="t bd red" style="left:1564px;width:44px;top:613px;text-align:right">70.00</div>
<div class="t bd red" style="left:1564px;width:44px;top:659px;text-align:right">60.00</div>
<div class="t bd red" style="left:1564px;width:44px;top:706px;text-align:right">50.00</div>
<div class="t bd red" style="left:1564px;width:44px;top:751px;text-align:right">40.00</div>
<div class="t bd red" style="left:1564px;width:44px;top:798px;text-align:right">30.00</div>
<div class="t bd red" style="left:1564px;width:44px;top:844px;text-align:right">20.00</div>

<!-- Date row -->
<div class="t bd red" style="left:5px;top:952px">2025年</div>
<div class="t bd red" style="left:249px;top:952px">9</div>
<div class="t bd red" style="left:583px;top:952px">10</div>
<div class="t bd red" style="left:842px;top:952px">11</div>
<div class="t bd red" style="left:1146px;top:952px">12</div>
<div class="t bd red" style="left:1494px;top:952px">1</div>
<div class="t" style="left:1575px;top:952px;font-size:13px;color:#ccc">日线</div>

<!-- Tabs row 1 -->
<span class="k" style="left:0;width:41px">指标A</span><span class="k" style="left:41px;width:32px">窗口</span><span class="k" style="left:73px;width:56px">双紫擒龙</span><span class="k" style="left:129px;width:56px">强势起爆</span><span class="k" style="left:185px;width:31px">均线</span><span class="k" style="left:216px;width:32px">擒龙</span><span class="k" style="left:248px;width:56px">镇店之宝</span><span class="k" style="left:304px;width:57px">飞碟妖龙</span><span class="k" style="left:361px;width:43px">主进出</span><span class="k" style="left:404px;width:81px">十全十美指标</span><span class="k" style="left:485px;width:32px">加仓</span><span class="k" style="left:517px;width:32px">转点</span><span class="k" style="left:549px;width:38px">资金2</span><span class="k" style="left:587px;width:45px">宁波敢</span><span class="k" style="left:632px;width:29px">AI龙</span><span class="k" style="left:661px;width:32px">顶底</span><span class="k" style="left:693px;width:58px">资金方向</span><span class="k" style="left:751px;width:43px">主控盘</span><span class="k" style="left:794px;width:44px">战神号</span><span class="k" style="left:838px;width:55px">动能二号</span><span class="k" style="left:893px;width:44px">飞碟妖</span><span class="k" style="left:937px;width:57px;color:#55ffff">财神到家</span><span class="k" style="left:994px;width:55px">游资里朝</span><span class="k" style="left:1049px;width:32px">多空</span><span class="k" style="left:1081px;width:57px">冰火里能</span><span class="k" style="left:1138px;width:55px">趋势多空</span><span class="k" style="left:1193px;width:56px">三龙聚首</span><span class="k" style="left:1249px;width:44px">高控盘</span><span class="k" style="left:1293px;width:57px">主力机构</span><span class="k" style="left:1350px;width:56px">短线情绪</span><span class="k" style="left:1406px;width:32px">暗盘</span><span class="k" style="left:1438px;width:15px">〉</span><span class="k" style="left:1453px;width:28px"></span><span class="k" style="left:1481px;width:40px">指标B</span><span class="k" style="left:1521px;width:43px">模 板</span><span class="k" style="left:1564px;width:25px;border-right:0">+</span><span class="k" style="left:1589px;width:25px;border-right:0">-</span>

<!-- Tabs row 2 -->
<span class="k m" style="left:0;width:40px">扩展∧</span><span class="k m" style="left:40px;width:57px">关联报价</span><span class="k m" style="left:97px;width:56px">资金流向</span><span class="k m" style="left:153px;width:55px;color:#c8c800">综合资讯</span><span class="k m" style="left:208px;width:57px;color:#c8c800">板块资讯</span>
<span class="k m" style="left:1516px;width:48px;color:#c8c800;border-left:1px solid #b00">图文F10</span><span class="k m" style="left:1564px;width:51px;color:#c8c800">侧边栏《</span>
<span class="k m" style="left:1615px;width:31px;color:#55ffff">笔</span><span class="k m" style="left:1646px;width:31px">价</span><span class="k m" style="left:1677px;width:31px">细</span><span class="k m" style="left:1708px;width:31px">势</span><span class="k m" style="left:1739px;width:31px">联</span><span class="k m" style="left:1770px;width:31px">值</span><span class="k m" style="left:1801px;width:31px">主</span><span class="k m" style="left:1832px;width:31px">逆</span><span class="k m" style="left:1863px;width:33px;border-right:0">筹</span>

<!-- Right panel head -->
<div class="t" style="left:1634px;top:33px;font-size:20px;color:#55ffff;letter-spacing:3px">七匹狼</div>
<div class="t" style="left:1706px;top:36px;font-size:14px;color:#c0c0c0">002029</div>
<div class="t" style="left:1758px;top:31px;font-size:12px;color:#ff3232">R</div>
<div class="t bd red" style="left:1618px;top:62px;font-size:19px">11.77</div>
<div class="t bd red" style="left:1716px;top:62px;font-size:18px">▲0.74</div>
<div class="t bd red" style="left:1836px;top:62px;font-size:19px">6.71%</div>

<!-- Order book -->
<div class="p" style="top:87px">
<div class="r"><span class="l">卖五</span><span class="pr">11.81</span><span class="v">1186</span></div>
<div class="r"><span class="l">卖四</span><span class="pr">11.80</span><span class="v">2349</span></div>
<div class="r"><span class="l">卖三</span><span class="pr">11.79</span><span class="v">596</span></div>
<div class="r"><span class="l">卖二</span><span class="pr">11.78</span><span class="v">2262</span></div>
<div class="r"><span class="l">卖一</span><span class="pr">11.77</span><span class="v">287</span></div>
</div>
<div class="p" style="top:179px">
<div class="r"><span class="l">买一</span><span class="pr">11.76</span><span class="v">1659</span></div>
<div class="r"><span class="l">买二</span><span class="pr">11.75</span><span class="v">629</span></div>
<div class="r"><span class="l">买三</span><span class="pr">11.74</span><span class="v">1456</span></div>
<div class="r"><span class="l">买四</span><span class="pr">11.73</span><span class="v">253</span></div>
<div class="r"><span class="l">买五</span><span class="pr">11.72</span><span class="v">100</span></div>
</div>

<!-- Stats -->
<div class="p" style="top:272px">
<div class="r r19"><span class="l">今开</span><span class="sv red">11.10</span><span class="l2">均价</span><span class="sw red">11.71</span></div>
<div class="r r19"><span class="l">最高</span><span class="sv red">12.12</span><span class="l2">量比</span><span class="sw red">1.71</span></div>
<div class="r r19"><span class="l">最低</span><span class="sv red">11.05</span><span class="l2">市值</span><span class="sw">83.0亿</span></div>
<div class="r r19"><span class="l">现量</span><span class="sv pu">6932</span><span class="l2">总量</span><span class="sw">767208</span></div>
<div class="r r19"><span class="l">外盘</span><span class="sv red">470459</span><span class="l2">内盘</span><span class="sw" style="color:#0f0">296749</span></div>
</div>
<div class="p" style="top:369px">
<div class="r r19"><span class="l">换手</span><span class="sv">11.53%</span><span class="l2">股本</span><span class="sw">7.05亿</span></div>
<div class="r r19"><span class="l">净资</span><span class="sv">9.68</span><span class="l2">流通</span><span class="sw">6.65亿</span></div>
<div class="r r19"><span class="l">收益(三)</span><span class="sv">0.590</span><span class="l2">PE(动)</span><span class="sw">15.4</span></div>
</div>
<div class="t" style="left:1616px;top:429px;font-size:16px;color:#c0c0c0">交易状态: 闭市阶段</div>
<div class="t" style="left:1765px;top:429px;font-size:14px;color:#c0c0c0">15:00:00</div>
<div class="t" style="left:1617px;top:452px;font-size:16px;color:#c0c0c0">主力净额</div>
<div class="t red" style="left:1807px;top:451px;font-size:15px">4068万</div>
<div class="t red" style="left:1875px;top:451px;font-size:14px">5%</div>

<!-- Ticks -->
<div class="p" style="top:473px">
<div class="r"><span class="a">14:55</span><span class="b">11.79</span><span class="n">111</span><span class="d x">B</span><span class="e">10</span></div>
<div class="r"><span class="b">11.79</span><span class="n pu">733</span><span class="d x">B</span><span class="e">30</span></div>
<div class="r"><span class="b">11.79</span><span class="n">56</span><span class="d">S</span><span class="e">6</span></div>
<div class="r"><span class="b">11.79</span><span class="n">152</span><span class="d">S</span><span class="e">14</span></div>
<div class="r"><span class="b">11.79</span><span class="n">60</span><span class="d">S</span><span class="e">9</span></div>
<div class="r"><span class="b">11.79</span><span class="n">27</span><span class="d">S</span><span class="e">5</span></div>
<div class="r"><span class="a">14:56</span><span class="b">11.79</span><span class="n">104</span><span class="d">S</span><span class="e">8</span></div>
<div class="r"><span class="b">11.79</span><span class="n">143</span><span class="d">S</span><span class="e">16</span></div>
<div class="r"><span class="b">11.79</span><span class="n">312</span><span class="d">S</span><span class="e">35</span></div>
<div class="r"><span class="b">11.80</span><span class="n">13</span><span class="d x">B</span><span class="e">5</span></div>
<div class="r"><span class="b">11.78</span><span class="n">24</span><span class="d">S</span><span class="e">5</span></div>
<div class="r"><span class="b">11.78</span><span class="n">111</span><span class="d">S</span><span class="e">15</span></div>
<div class="r"><span class="b">11.78</span><span class="n">213</span><span class="d">S</span><span class="e">22</span></div>
<div class="r"><span class="b">11.78</span><span class="n">95</span><span class="d">S</span><span class="e">17</span></div>
<div class="r"><span class="b">11.79</span><span class="n">20</span><span class="d x">B</span><span class="e">3</span></div>
<div class="r"><span class="b">11.79</span><span class="n">85</span><span class="d x">B</span><span class="e">10</span></div>
<div class="r"><span class="b">11.79</span><span class="n">21</span><span class="d">S</span><span class="e">2</span></div>
<div class="r"><span class="b">11.79</span><span class="n">270</span><span class="d x">B</span><span class="e">23</span></div>
<div class="r"><span class="b">11.79</span><span class="n">32</span><span class="d x">B</span><span class="e">9</span></div>
<div class="r"><span class="b">11.79</span><span class="n">128</span><span class="d x">B</span><span class="e">17</span></div>
<div class="r"><span class="b">11.78</span><span class="n">86</span><span class="d">S</span><span class="e">11</span></div>
<div class="r"><span class="b">11.78</span><span class="n">174</span><span class="d">S</span><span class="e">26</span></div>
<div class="r"><span class="b">11.78</span><span class="n">62</span><span class="d">S</span><span class="e">8</span></div>
<div class="r"><span class="b">11.79</span><span class="n">259</span><span class="d x">B</span><span class="e">10</span></div>
<div class="r"><span class="b">11.78</span><span class="n">55</span><span class="d">S</span><span class="e">10</span></div>
<div class="r"><span class="b">11.78</span><span class="n">209</span><span class="d">S</span><span class="e">13</span></div>
<div class="r"><span class="a">14:57</span><span class="b">11.78</span><span class="n">159</span><span class="d x">B</span><span class="e">9</span></div>
<div class="r"><span class="a">15:00</span><span class="b">11.77</span><span class="n pu">6932</span><span class="e">356</span></div>
</div>

<!-- Sidebar text -->
<svg width="1920" height="1050" viewBox="0 0 1920 1050" style="pointer-events:none">
<g font-family="Liberation Sans,sans-serif" text-anchor="middle" fill="#2f7fe8">
<text x="1907.5" y="232" font-size="10">F10</text>
<text x="1907.5" y="299" font-size="10">F12</text>
<text x="1907.5" y="323" font-size="9" fill="#107070" font-style="italic">f(x)</text>
<text x="1907.5" y="399" font-size="10" font-weight="bold" fill="#3050c0">RSI</text>
<text x="1907.5" y="499" font-size="10">F5</text>
</g>
<g font-family="Liberation Sans,'WenQuanYi Zen Hei',sans-serif" text-anchor="middle" fill="#0a3a8c" font-size="12">
<text x="1907" y="546">1</text><text x="1907" y="568">5</text><text x="1907" y="591">15</text><text x="1907" y="614">30</text><text x="1907" y="637">60</text>
<text x="1908" y="662">日</text><text x="1908" y="686">周</text><text x="1908" y="708">月</text><text x="1908" y="730">N</text><text x="1908" y="754">多</text><text x="1908" y="776">季</text><text x="1908" y="798">年</text>
</g>
</svg>

<!-- Ticker -->
<span class="tk" style="left:6px">[发行与上市提示]科创板发行预披露提示</span>
<span class="tk" style="left:262px">[今日特别提示]今日债券分红提示</span>
<span class="tk" style="left:482px">[今日特别提示]今日上市公司业绩预告提示</span>
<span class="tk" style="left:750px">[未来特别提示]未来一月债券分红提示</span>
<span class="tk" style="left:995px">[未来特别提示]未来一周债券分红提示</span>
<span class="tk" style="left:1238px">[发行与上市提示]可转债发行与上市提示</span>
<span class="tk" style="left:1494px">[发行与上市提示]债券发行与上市提示</span>
<span class="tk" style="left:1739px">[再融资提示]增发与配股提示</span>

<!-- Status bar -->
<span class="st" style="left:25px">上证</span><span class="st red" style="left:60px">4083.67</span><span class="st red" style="left:133px">60.25</span><span class="st red" style="left:184px">1.50%</span><span class="st" style="left:241px">11758亿</span>
<span class="st" style="left:299px">深证</span><span class="st red" style="left:336px">14022.55</span><span class="st red" style="left:404px">193.92</span><span class="st red" style="left:458px">1.40%</span><span class="st" style="left:516px">16308亿</span>
<span class="st" style="left:574px">创业</span><span class="st red" style="left:609px">3319.29</span><span class="st red" style="left:683px">24.74</span><span class="st red" style="left:730px">0.75%</span><span class="st" style="left:789px">7635亿</span>
<span class="st" style="left:852px">总成交</span><span class="st" style="left:903px">28326亿</span>
<span class="st" style="left:987px;font-size:12px;color:#ddd">2</span><span class="st" style="left:1002px;font-size:13px">已连接</span>
<span class="st" style="left:1845px;color:#e8c890;font-size:13px">18:37:42</span>

</body>
</html>
